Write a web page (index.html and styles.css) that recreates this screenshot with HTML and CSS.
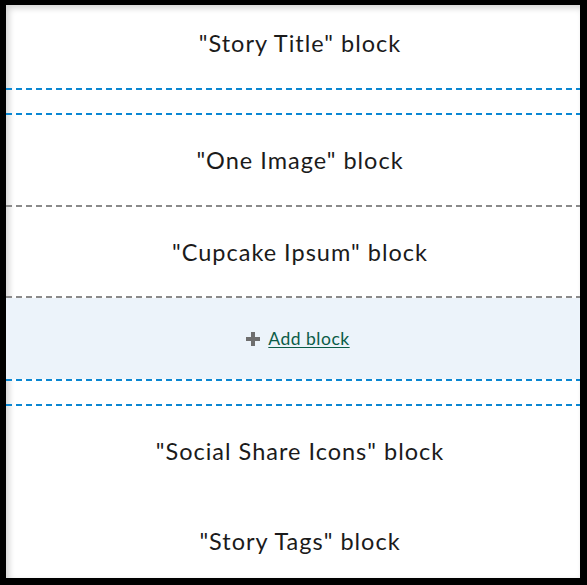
FILE: index.html
```html
<!DOCTYPE html>
<html>
<head>
<meta charset="utf-8">
<link rel="stylesheet" href="styles.css">
</head>
<body>
<div class="frame">
  <div class="canvas">
    <div class="content">
      <div class="block block-first">"Story Title" block</div>
      <div class="divider divider-blue"></div>
      <div class="dropzone"></div>
      <div class="divider divider-blue"></div>
      <div class="block">"One Image" block</div>
      <div class="divider divider-gray"></div>
      <div class="block block-short">"Cupcake Ipsum" block</div>
      <div class="divider divider-gray"></div>
      <div class="add-zone">
        <span class="plus" aria-hidden="true">
          <svg width="14" height="14" viewBox="0 0 14 14"><rect x="5" y="0" width="4" height="14" fill="#6e6e6e"/><rect x="0" y="5" width="14" height="4" fill="#6e6e6e"/></svg>
        </span>
        <a class="add-link" href="#">Add block</a>
      </div>
      <div class="divider divider-blue"></div>
      <div class="dropzone"></div>
      <div class="divider divider-blue"></div>
      <div class="block">"Social Share Icons" block</div>
      <div class="block">"Story Tags" block</div>
    </div>
  </div>
</div>
</body>
</html>
```
FILE: styles.css
```css
html, body {
  margin: 0;
  padding: 0;
  background: #000;
}
.frame {
  width: 587px;
  height: 585px;
  box-sizing: border-box;
  padding: 5px 7px 7px 6px;
  background: #000;
}
.canvas {
  height: 100%;
  background: #fff;
  overflow: hidden;
  position: relative;
  box-shadow: inset 3px 3px 6px rgba(0,0,0,0.18);
  font-family: Lato, "Open Sans", sans-serif;
  color: #1b1b1b;
}
.content {
  width: 588px;
}
.block {
  height: 90px;
  display: flex;
  align-items: center;
  justify-content: center;
  font-size: 23.5px;
  letter-spacing: 1px;
}
.block-first {
  height: 83px;
  box-sizing: border-box;
  padding-bottom: 8px;
}
.block-short {
  height: 89px;
}
.divider {
  height: 2px;
}
.divider-blue {
  background: repeating-linear-gradient(90deg, #0a87d2 0 6px, transparent 6px 10px);
}
.divider-gray {
  background: repeating-linear-gradient(90deg, #8a8a8a 0 6px, transparent 6px 10px);
}
.dropzone {
  height: 23px;
}
.add-zone {
  height: 81px;
  background: #ecf3fa;
  display: flex;
  align-items: center;
  justify-content: center;
  gap: 8px;
}
.plus {
  display: flex;
  margin-left: -4px;
}
.add-link {
  font-size: 17.5px;
  letter-spacing: 0.5px;
  color: #0b5c48;
  text-decoration: underline;
  text-underline-offset: 2px;
}
```
